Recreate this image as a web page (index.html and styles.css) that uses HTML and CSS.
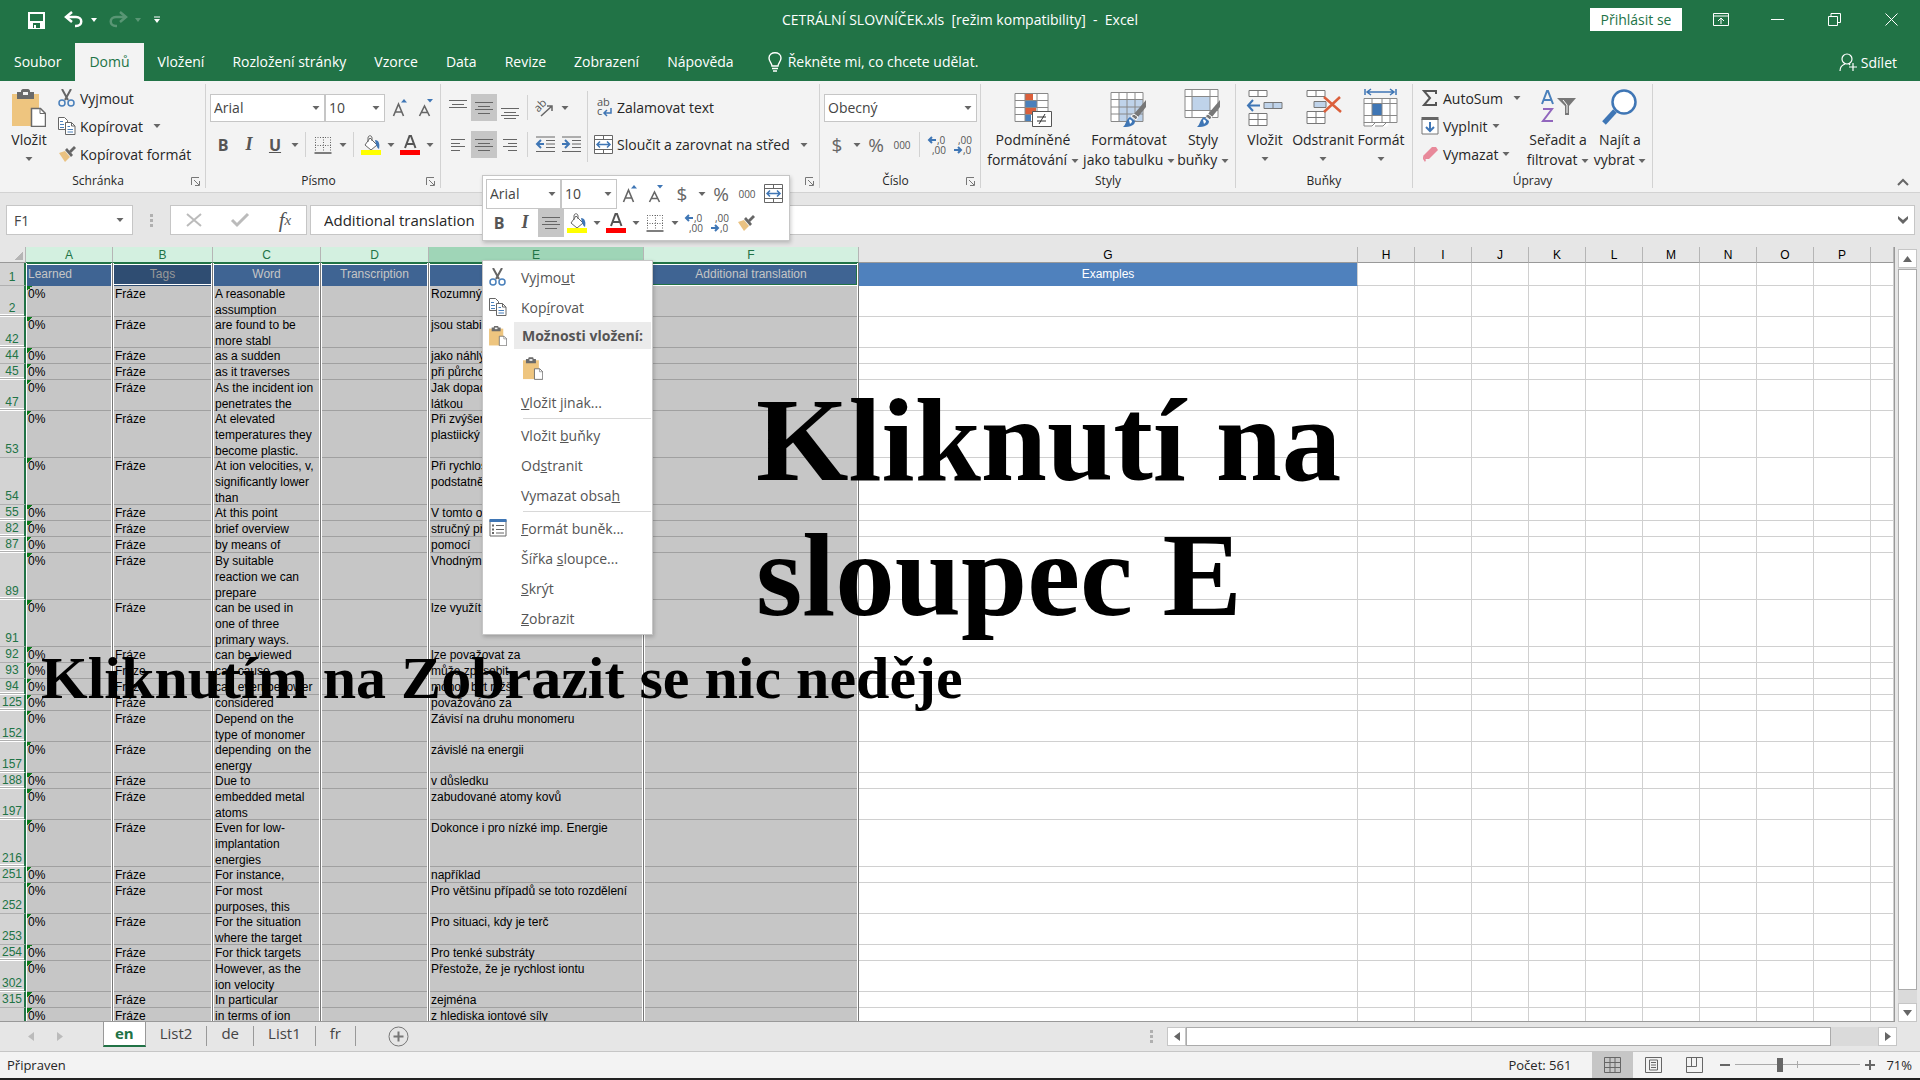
FILE: index.html
```html
<!DOCTYPE html>
<html lang="cs">
<head>
    <meta charset="UTF-8">
    <meta name="viewport" content="width=device-width, initial-scale=1.0">
    <title>CETRÁLNÍ SLOVNÍČEK.xls - Excel</title>
    <link rel="stylesheet" href="styles.css">
</head>
<body>
    <!-- icons used more than once -->
    <svg class="defs" width="0" height="0" aria-hidden="true">
        <symbol id="i-caret" viewBox="0 0 8 8"><path d="M0.500 2h7L4 6z" fill="#666"/></symbol>
        <symbol id="i-cut" viewBox="0 0 18 18"><path d="M4 0l6 11M13 0L7 11" stroke="#666" stroke-width="2" fill="none"/><circle cx="4" cy="14" r="3" fill="none" stroke="#4a80bb" stroke-width="1.500"/><circle cx="13" cy="14" r="3" fill="none" stroke="#4a80bb" stroke-width="1.500"/></symbol>
        <symbol id="i-copy" viewBox="0 0 18 18"><path d="M.5.5h6l3 3v9h-9z" fill="#fff" stroke="#666"/><path d="M7.500 5.500h6l3.500 3.500v8.500H7.500z" fill="#fff" stroke="#666"/><path d="M13.500 5.500V9H17" fill="none" stroke="#666"/><path d="M2 4.500h3M2 7.500h4M2 10.500h4M9.500 9.500h2.500M9.500 12.500h5.500M9.500 15h5.500" stroke="#4a80bb"/></symbol>
        <symbol id="i-brush" viewBox="0 0 18 18"><path d="M1 8l6-2 5 6-5 5z" fill="#eac282"/><path d="M7 5l2-2 6 7-2 2z" fill="#666"/><path d="M11 6l5-5 2 2-5 5z" fill="#666"/></symbol>
        <symbol id="i-paste" viewBox="0 0 34 38"><path d="M0 5h27v32H0z" fill="#eec57f"/><path d="M5 3h4V2c0-1 1-2 2-2h5c1 0 2 1 2 2v1h4v7H5z" fill="#6a6a6a"/><path d="M11 3h5v3h-5z" fill="#f3f3f3"/><path d="M19.500 19.500h9l5 5v13h-14z" fill="#fff" stroke="#6a6a6a" stroke-width="1.500"/><path d="M28 19.500v5h5.500" fill="none" stroke="#6a6a6a"/></symbol>
        <symbol id="i-borders" viewBox="0 0 18 18"><path d="M1 1.500h16M1 9.500h16M1.500 1v15M9.500 1v15M16.500 1v15" stroke="#666" stroke-dasharray="1 1.500" fill="none"/><path d="M.5 17h17" stroke="#555" stroke-width="1.500"/></symbol>
        <symbol id="i-fill" viewBox="0 0 20 20"><path d="M9 3l7 7-6 5-6-5z" fill="#fff" stroke="#666"/><path d="M7 7V3c0-3 4-3 4 0v3" fill="none" stroke="#666"/><path d="M14 5c4 0 5 4 4 9-2-1-3-4-4-9z" fill="#3f76b5"/><path d="M0 15h20v5H0z" fill="#ff0"/></symbol>
        <symbol id="i-fontcolor" viewBox="0 0 20 20"><path d="M5 13L9.500 1h1.500L15.500 13M6.500 9h7" fill="none" stroke="#555" stroke-width="2"/><path d="M0 15h20v5H0z" fill="red"/></symbol>
        <symbol id="i-grow" viewBox="0 0 16 18"><path d="M1.500 17L6.500 5 11.500 17M3 13h7" fill="none" stroke="#666" stroke-width="1.600"/><path d="M9 3.500L12 0l3 3.500z" fill="#3f76b5"/></symbol>
        <symbol id="i-shrink" viewBox="0 0 16 18"><path d="M1.500 17L6.500 7 11.500 17M3 13.500h7" fill="none" stroke="#666" stroke-width="1.600"/><path d="M9 0L12 3.500l3-3.500z" fill="#3f76b5"/></symbol>
        <symbol id="i-center" viewBox="0 0 18 14"><path d="M0 1.500h18M3 5.500h12M0 8.500h18M3 12.500h12" stroke="#666"/></symbol>
        <symbol id="i-merge" viewBox="0 0 19 19"><path d="M.5.500h18v18H.5zM.5 4.500h18M.5 14.500h18M9.500.5v4M9.500 14.500v4" fill="#fff" stroke="#666"/><path d="M3 9.500h13M6 6.500l-3 3 3 3M13 6.500l3 3-3 3" fill="none" stroke="#3f76b5" stroke-width="1.500"/></symbol>
        <symbol id="i-style-brush" viewBox="0 0 24 28"><path d="M23 0v7l-8 10-4-3z" fill="#777"/><path d="M11 14l4 3-2 3-5-4z" fill="#777" stroke="#fff"/><path d="M0 27c3-2 3-8 7-10l5 4c0 4-4 6-12 6z" fill="#3f76b5"/><path d="M6 20c1-1 3 0 3 2l-2 2" fill="#fff"/></symbol>
    </svg>

    <header class="titlebar">
        <div class="quick">
            <button aria-label="Uložit"><svg width="17" height="17"><path d="M1 1h15v15H1z" fill="none" stroke="#fff" stroke-width="2"/><path d="M2 9h13v7H2z" fill="#fff"/><path d="M5 11h7v5H5z" fill="#217346"/><path d="M6 13h2v3H6z" fill="#fff"/></svg></button>
            <button aria-label="Zpět"><svg width="18" height="16"><path d="M2 5h9c7 0 7 9 0 9h-1" fill="none" stroke="#fff" stroke-width="2.500"/><path d="M7 0L1 5l6 5" fill="none" stroke="#fff" stroke-width="2.500"/></svg><i class="tri"></i></button>
            <button class="off" aria-label="Znovu"><svg width="18" height="16"><path d="M16 5H7c-7 0-7 9 0 9h1" fill="none" stroke="#fff" stroke-width="2.500"/><path d="M11 0l6 5-6 5" fill="none" stroke="#fff" stroke-width="2.500"/></svg><i class="tri"></i></button>
            <button aria-label="Přizpůsobit"><svg width="8" height="8"><path d="M1 1h6" stroke="#fff"/><path d="M1 3h6L4 7z" fill="#fff"/></svg></button>
        </div>
        <div class="doc-title">CETRÁLNÍ SLOVNÍČEK.xls&nbsp; [režim kompatibility]&nbsp; -&nbsp; Excel</div>
        <div class="window-buttons">
            <button class="signin">Přihlásit se</button>
            <button aria-label="Zobrazení pásu karet"><svg width="16" height="13"><path d="M.5.500h15v12H.5zM.5 3h15M8 11V5M5 8l3-3 3 3" fill="none" stroke="#fff"/></svg></button>
            <button aria-label="Minimalizovat"><svg width="13" height="13"><path d="M0 6.500h13" stroke="#fff"/></svg></button>
            <button aria-label="Obnovit"><svg width="13" height="13"><path d="M.5 3.500h9v9h-9zM3 3V.5h9.500v9H10" fill="none" stroke="#fff"/></svg></button>
            <button aria-label="Zavřít"><svg width="13" height="13"><path d="M.5.5l12 12M12.500.5l-12 12" stroke="#fff"/></svg></button>
        </div>
    </header>

    <nav class="tabs">
        <a href="#">Soubor</a>
        <a href="#" class="active">Domů</a>
        <a href="#">Vložení</a>
        <a href="#">Rozložení stránky</a>
        <a href="#">Vzorce</a>
        <a href="#">Data</a>
        <a href="#">Revize</a>
        <a href="#">Zobrazení</a>
        <a href="#">Nápověda</a>
        <a href="#" class="tell"><svg width="14" height="20"><path d="M4 14c0-3-3-4-3-8 0-7 12-7 12 0 0 4-3 5-3 8zM4 16.500h6M5 19h4" fill="none" stroke="#fff" stroke-width="1.400"/></svg>Řekněte mi, co chcete udělat.</a>
        <a href="#" class="share"><svg width="18" height="18"><circle cx="8" cy="6" r="5" fill="none" stroke="#fff" stroke-width="1.200"/><path d="M1 18c0-4 2-6 5-7M10 11l1 1M14 10v8M10 14h8" fill="none" stroke="#fff" stroke-width="1.200"/></svg>Sdílet</a>
    </nav>

    <section class="ribbon">
        <div class="group clipboard">
            <div class="group-body">
                <button class="big"><svg width="34" height="38"><use href="#i-paste"/></svg><span>Vložit</span><svg class="caret"><use href="#i-caret"/></svg></button>
                <div class="stack">
                    <button class="line"><svg width="18" height="18"><use href="#i-cut"/></svg>Vyjmout</button>
                    <button class="line"><svg width="18" height="18"><use href="#i-copy"/></svg>Kopírovat<svg class="caret far"><use href="#i-caret"/></svg></button>
                    <button class="line"><svg width="18" height="18"><use href="#i-brush"/></svg>Kopírovat formát</button>
                </div>
            </div>
            <div class="group-label"><span>Schránka</span><svg class="launch"><path d="M.5 8V.5H8M3 3l5 5M8.500 4v4.500H4" /></svg></div>
        </div>

        <div class="group font">
            <div class="group-body rows">
                <div class="tool-row">
                    <div class="combo family"><input type="text" value="Arial" aria-label="Písmo"><svg class="caret"><use href="#i-caret"/></svg></div>
                    <div class="combo size"><input type="text" value="10" aria-label="Velikost"><svg class="caret"><use href="#i-caret"/></svg></div>
                    <button class="tool" aria-label="Zvětšit písmo"><svg width="16" height="18"><use href="#i-grow"/></svg></button>
                    <button class="tool" aria-label="Zmenšit písmo"><svg width="16" height="18"><use href="#i-shrink"/></svg></button>
                </div>
                <div class="tool-row">
                    <button class="tool bold">B</button>
                    <button class="tool italic">I</button>
                    <button class="tool under">U</button>
                    <button class="drop" aria-label="Více"><svg class="caret"><use href="#i-caret"/></svg></button>
                    <span class="sep"></span>
                    <button class="tool" aria-label="Ohraničení"><svg width="18" height="18"><use href="#i-borders"/></svg></button>
                    <button class="drop" aria-label="Více"><svg class="caret"><use href="#i-caret"/></svg></button>
                    <span class="sep"></span>
                    <button class="tool" aria-label="Barva výplně"><svg width="20" height="20"><use href="#i-fill"/></svg></button>
                    <button class="drop" aria-label="Více"><svg class="caret"><use href="#i-caret"/></svg></button>
                    <button class="tool" aria-label="Barva písma"><svg width="20" height="20"><use href="#i-fontcolor"/></svg></button>
                    <button class="drop" aria-label="Více"><svg class="caret"><use href="#i-caret"/></svg></button>
                </div>
            </div>
            <div class="group-label"><span>Písmo</span><svg class="launch"><path d="M.5 8V.5H8M3 3l5 5M8.500 4v4.500H4" /></svg></div>
        </div>

        <div class="group align">
            <div class="group-body">
                <div class="rows">
                    <div class="tool-row">
                        <button class="tool" aria-label="Nahoru"><svg width="18" height="22"><path d="M0 3.500h18M3 7.500h12M0 10.500h18" stroke="#666"/></svg></button>
                        <button class="tool on" aria-label="Na střed svisle"><svg width="18" height="14"><use href="#i-center"/></svg></button>
                        <button class="tool" aria-label="Dolů"><svg width="18" height="22"><path d="M0 11.500h18M3 15.500h12M0 18.500h18M3 21.500h12" stroke="#666"/></svg></button>
                        <span class="sep"></span>
                        <button class="tool" aria-label="Orientace"><svg width="20" height="20"><text x="0" y="11" transform="rotate(-45 6 9)" class="ab">ab</text><path d="M6 18L17 8M12 8h5v5" fill="none" stroke="#666" stroke-width="1.500"/></svg></button>
                        <button class="drop" aria-label="Více"><svg class="caret"><use href="#i-caret"/></svg></button>
                    </div>
                    <div class="tool-row">
                        <button class="tool" aria-label="Vlevo"><svg width="14" height="14"><path d="M0 1.500h14M0 5.500h9M0 8.500h14M0 12.500h9" stroke="#666"/></svg></button>
                        <button class="tool on" aria-label="Na střed"><svg width="18" height="14"><use href="#i-center"/></svg></button>
                        <button class="tool" aria-label="Vpravo"><svg width="14" height="14"><path d="M0 1.500h14M5 5.500h9M0 8.500h14M5 12.500h9" stroke="#666"/></svg></button>
                        <span class="sep"></span>
                        <button class="tool" aria-label="Zmenšit odsazení"><svg width="19" height="17"><path d="M0 1h19M10 4.500h9M10 8h9M10 11.500h9M0 15.500h19" stroke="#666"/><path d="M8 8H2M5 4L1 8l4 4" fill="none" stroke="#3f76b5" stroke-width="2"/></svg></button>
                        <button class="tool" aria-label="Zvětšit odsazení"><svg width="19" height="17"><path d="M0 1h19M10 4.500h9M10 8h9M10 11.500h9M0 15.500h19" stroke="#666"/><path d="M0 8h6M3 4l4 4-4 4" fill="none" stroke="#3f76b5" stroke-width="2"/></svg></button>
                    </div>
                </div>
                <span class="sep tall"></span>
                <div class="rows wide">
                    <button class="line"><svg width="19" height="19"><text x="3" y="8" class="ab">ab</text><text x="3" y="17" class="ab">c</text><path d="M17 10v5H11M13 12l-3 3 3 3" fill="none" stroke="#3f76b5" stroke-width="1.500"/></svg>Zalamovat text</button>
                    <button class="line"><svg width="19" height="19"><use href="#i-merge"/></svg>Sloučit a zarovnat na střed<svg class="caret far"><use href="#i-caret"/></svg></button>
                </div>
            </div>
            <div class="group-label"><span>Zarovnání</span><svg class="launch"><path d="M.5 8V.5H8M3 3l5 5M8.500 4v4.500H4" /></svg></div>
        </div>

        <div class="group number">
            <div class="group-body rows">
                <div class="tool-row">
                    <div class="combo format"><input type="text" value="Obecný" aria-label="Formát čísla"><svg class="caret"><use href="#i-caret"/></svg></div>
                </div>
                <div class="tool-row">
                    <button class="tool sign">$</button>
                    <button class="drop" aria-label="Více"><svg class="caret"><use href="#i-caret"/></svg></button>
                    <button class="tool sign">%</button>
                    <button class="tool zeros">000</button>
                    <span class="sep"></span>
                    <button class="tool" aria-label="Přidat desetinné místo"><svg width="18" height="20"><text x="9" y="9" class="dec">,0</text><text x="4" y="19" class="dec">,00</text><path d="M1 5h7M4 2L1 5l3 3" fill="none" stroke="#3f76b5" stroke-width="2"/></svg></button>
                    <button class="tool" aria-label="Odebrat desetinné místo"><svg width="18" height="20"><text x="4" y="9" class="dec">,00</text><text x="9" y="19" class="dec">,0</text><path d="M0 15h7M4 12l3 3-3 3" fill="none" stroke="#3f76b5" stroke-width="2"/></svg></button>
                </div>
            </div>
            <div class="group-label"><span>Číslo</span><svg class="launch"><path d="M.5 8V.5H8M3 3l5 5M8.500 4v4.500H4" /></svg></div>
        </div>

        <div class="group styles">
            <div class="group-body">
                <button class="big"><svg width="38" height="38"><path d="M1 4.500h33v27H1z" fill="#fff"/><path d="M11 4h8v7h-8zM11 19h11v6H11z" fill="#db5f3b"/><path d="M11 12h12v6H11zM11 26h6v6h-6z" fill="#4a80bb"/><path d="M1 4.500h33v28H1zM1 11.500h33M1 18.500h33M1 25.500h33M11 4v28M23 4v28" fill="none" stroke="#888"/><path d="M18.500 22.500h19v15h-19z" fill="#fff" stroke="#555"/><path d="M23 28h9M23 32h9M31 25l-6 10" stroke="#333"/></svg><span>Podmíněné<br>formátování <svg class="caret"><use href="#i-caret"/></svg></span></button>
                <button class="big"><svg width="38" height="38"><path d="M1 3.500h32v29H1z" fill="#fff"/><path d="M9 10h24v22H9z" fill="#bfd3ea"/><path d="M1 3.500h32v29H1zM1 10.500h32M1 18h32M1 25h32M9 3v29M17 3v29M25 3v29" fill="none" stroke="#888"/><use href="#i-style-brush" x="12" y="11" width="26" height="28"/></svg><span>Formátovat<br>jako tabulku <svg class="caret"><use href="#i-caret"/></svg></span></button>
                <button class="big"><svg width="38" height="38"><path d="M1 .5h33v28H1z" fill="#fff"/><path d="M8 8h18v13H8z" fill="#bfd3ea"/><path d="M1 .5h33v28H1zM1 7.500h33M1 21.500h33M8 1v27M26 1v27" fill="none" stroke="#888"/><use href="#i-style-brush" x="12" y="11" width="26" height="28"/></svg><span>Styly<br>buňky <svg class="caret"><use href="#i-caret"/></svg></span></button>
            </div>
            <div class="group-label"><span>Styly</span></div>
        </div>

        <div class="group cells">
            <div class="group-body">
                <button class="big"><svg width="38" height="38"><path d="M3 1.500h18v6H3zM12 1v6M3 24.500h18v12H3zM3 30.500h18M12 24v12" fill="#fff" stroke="#777"/><path d="M18 13.500h18v6H18zM27 13v6" fill="#bfd3ea" stroke="#777"/><path d="M14 16.500H2M7 11l-5 5.500L7 22" fill="none" stroke="#3f76b5" stroke-width="2"/></svg><span>Vložit</span><svg class="caret"><use href="#i-caret"/></svg></button>
                <button class="big"><svg width="38" height="38"><path d="M3 1.500h18v6H3zM12 1v6M3 22.500h18v12H3zM3 28.500h18M12 22v12" fill="#fff" stroke="#777"/><path d="M10 12.500h12v6H10z" fill="#bfd3ea" stroke="#777"/><path d="M20 8l17 15M36 8L20 23" fill="none" stroke="#db5f3b" stroke-width="2.500"/></svg><span>Odstranit</span><svg class="caret"><use href="#i-caret"/></svg></button>
                <button class="big"><svg width="38" height="38"><path d="M2 9.500h33v24h-7l-3 4H2z" fill="#fff"/><path d="M10 15h10v11H10z" fill="#3f76b5"/><path d="M2 9.500h33v24H2zM2 14.500h33M2 26.500h33M10 9v24M20 9v24M28 9v24M2 33v4h8l3-3M13 37h8l4-4" fill="none" stroke="#888"/><path d="M3 0v6M34 0v6M5 3h27M9 0L5 3l4 3M28 0l4 3-4 3" fill="none" stroke="#3f76b5" stroke-width="1.500"/></svg><span>Formát</span><svg class="caret"><use href="#i-caret"/></svg></button>
            </div>
            <div class="group-label"><span>Buňky</span></div>
        </div>

        <div class="group editing">
            <div class="group-body">
                <div class="stack">
                    <button class="line"><svg width="18" height="18"><path d="M15 5V2H3l6 7-6 7h12v-3" fill="none" stroke="#555" stroke-width="2"/></svg>AutoSum<svg class="caret far"><use href="#i-caret"/></svg></button>
                    <button class="line"><svg width="18" height="18"><path d="M1 2h16v15H1z" fill="#fff" stroke="#777"/><path d="M.5 1.500h17" stroke="#666" stroke-width="3"/><path d="M9 5v9M5 10l4 4 4-4" fill="none" stroke="#3f76b5" stroke-width="2"/></svg>Vyplnit<svg class="caret"><use href="#i-caret"/></svg></button>
                    <button class="line"><svg width="18" height="18"><path d="M2 11l9-9h4l2 3-9 9H4z" fill="#e8899a"/><path d="M2 11l3 4-1 2-2-3z" fill="#e8899a"/></svg>Vymazat<svg class="caret"><use href="#i-caret"/></svg></button>
                </div>
                <button class="big"><svg width="38" height="38"><path d="M3 15L8 2h1l5 13M5 11h7" fill="none" stroke="#4a80bb" stroke-width="2"/><path d="M4 20h9L4 32h10" fill="none" stroke="#9166bd" stroke-width="2"/><path d="M18 9h19l-7 8v9h-4v-9z" fill="#777"/><path d="M24 11l4 5v8" fill="none" stroke="#fff"/></svg><span>Seřadit a<br>filtrovat <svg class="caret"><use href="#i-caret"/></svg></span></button>
                <button class="big"><svg width="38" height="38"><path d="M14 22L3 34" stroke="#3f76b5" stroke-width="5"/><circle cx="23" cy="13" r="11.500" fill="#fff" stroke="#3f76b5" stroke-width="2.500"/></svg><span>Najít a<br>vybrat <svg class="caret"><use href="#i-caret"/></svg></span></button>
            </div>
            <div class="group-label"><span>Úpravy</span></div>
        </div>
        <button class="collapse" aria-label="Sbalit pás karet"><svg width="12" height="8"><path d="M1 7l5-5 5 5" fill="none" stroke="#666" stroke-width="2"/></svg></button>
    </section>

    <section class="formula-bar">
        <div class="combo name-box"><input type="text" value="F1" aria-label="Pole názvů"><svg class="caret"><use href="#i-caret"/></svg></div>
        <span class="dots"></span>
        <div class="formula-tools">
            <button aria-label="Storno"><svg width="16" height="14"><path d="M1 1l14 12M15 1L1 13" stroke="#bbb" stroke-width="2"/></svg></button>
            <button aria-label="Zadat"><svg width="18" height="14"><path d="M1 7l5 5L17 1" fill="none" stroke="#bbb" stroke-width="3"/></svg></button>
            <button class="fx">f<small>x</small></button>
        </div>
        <div class="formula-input"><input type="text" value="Additional translation" aria-label="Řádek vzorců"><svg width="10" height="8"><path d="M0 0l5 4 5-4v3L5 8 0 3z" fill="#666"/></svg></div>
    </section>

    <main class="workspace">
        <div class="sheet">
            <table>
                <colgroup>
                    <col class="c-head"><col class="c-a"><col class="c-b"><col class="c-c"><col class="c-c"><col class="c-e"><col class="c-e"><col class="c-g">
                    <col class="c-n"><col class="c-n"><col class="c-n"><col class="c-n"><col class="c-n"><col class="c-n"><col class="c-n"><col class="c-n"><col class="c-n"><col>
                </colgroup>
                <thead><tr id="letters"></tr></thead>
                <tbody id="rows"></tbody>
            </table>
        </div>
        <div class="vscroll">
            <button aria-label="Nahoru"><svg width="9" height="6"><path d="M0 6h9L4.500 0z" fill="#666"/></svg></button>
            <div class="thumb"></div>
            <div class="track"></div>
            <button aria-label="Dolů"><svg width="9" height="6"><path d="M0 0h9L4.500 6z" fill="#666"/></svg></button>
        </div>
    </main>

    <footer>
        <div class="sheet-tabs">
            <div class="tab-nav">
                <button aria-label="Předchozí"><svg width="6" height="9"><path d="M6 0v9L0 4.500z" fill="#bbb"/></svg></button>
                <button aria-label="Další"><svg width="6" height="9"><path d="M0 0v9l6-4.500z" fill="#bbb"/></svg></button>
            </div>
            <a href="#" class="current">en</a>
            <a href="#">List2</a>
            <a href="#">de</a>
            <a href="#">List1</a>
            <a href="#">fr</a>
            <button class="add" aria-label="Nový list"><svg width="21" height="21"><circle cx="10.500" cy="10.500" r="9.500" fill="none" stroke="#777"/><path d="M5.500 10.500h10M10.500 5.500v10" stroke="#777" stroke-width="2"/></svg></button>
            <span class="dots"></span>
            <div class="hscroll">
                <button aria-label="Vlevo"><svg width="6" height="9"><path d="M6 0v9L0 4.500z" fill="#666"/></svg></button>
                <div class="thumb"></div>
                <div class="track"></div>
                <button aria-label="Vpravo"><svg width="6" height="9"><path d="M0 0v9l6-4.500z" fill="#666"/></svg></button>
            </div>
        </div>
        <div class="status">
            <span class="ready">Připraven</span>
            <span class="count">Počet: 561</span>
            <button class="view on" aria-label="Normální"><svg width="17" height="16"><path d="M.5.500h16v15H.5zM.5 5.500h16M.5 10.500h16M6 .5v15M11 .5v15" fill="none" stroke="#666"/></svg></button>
            <button class="view" aria-label="Rozložení stránky"><svg width="17" height="16"><path d="M.5.500h16v15H.5zM4.500 3h8v10h-8zM6 5.500h5M6 8h5M6 10.500h5" fill="none" stroke="#666"/></svg></button>
            <button class="view" aria-label="Konce stránek"><svg width="17" height="16"><path d="M.5.500h16v15H.5zM.5 9.500h10V.5M5.500.5v9" fill="none" stroke="#666"/></svg></button>
            <button class="zoom-step" aria-label="Oddálit"><svg width="10" height="10"><path d="M0 5h10" stroke="#666" stroke-width="2"/></svg></button>
            <input class="zoom" type="range" min="0" max="100" value="35" aria-label="Lupa">
            <button class="zoom-step" aria-label="Přiblížit"><svg width="10" height="10"><path d="M0 5h10M5 0v10" stroke="#666" stroke-width="2"/></svg></button>
            <span class="percent">71%</span>
        </div>
    </footer>

    <div class="mini-toolbar">
        <div class="tool-row">
            <div class="combo mini-family"><input type="text" value="Arial" aria-label="Písmo"><svg class="caret"><use href="#i-caret"/></svg></div>
            <div class="combo mini-size"><input type="text" value="10" aria-label="Velikost"><svg class="caret"><use href="#i-caret"/></svg></div>
            <button class="tool" aria-label="Zvětšit písmo"><svg width="16" height="18"><use href="#i-grow"/></svg></button>
            <button class="tool" aria-label="Zmenšit písmo"><svg width="16" height="18"><use href="#i-shrink"/></svg></button>
            <button class="tool sign">$</button>
            <button class="drop" aria-label="Více"><svg class="caret"><use href="#i-caret"/></svg></button>
            <button class="tool sign">%</button>
            <button class="tool zeros">000</button>
            <button class="tool" aria-label="Sloučit"><svg width="19" height="19"><use href="#i-merge"/></svg></button>
        </div>
        <div class="tool-row">
            <button class="tool bold">B</button>
            <button class="tool italic">I</button>
            <button class="tool on" aria-label="Na střed"><svg width="18" height="14"><use href="#i-center"/></svg></button>
            <button class="tool" aria-label="Barva výplně"><svg width="20" height="20"><use href="#i-fill"/></svg></button>
            <button class="drop" aria-label="Více"><svg class="caret"><use href="#i-caret"/></svg></button>
            <button class="tool" aria-label="Barva písma"><svg width="20" height="20"><use href="#i-fontcolor"/></svg></button>
            <button class="drop" aria-label="Více"><svg class="caret"><use href="#i-caret"/></svg></button>
            <button class="tool" aria-label="Ohraničení"><svg width="18" height="18"><use href="#i-borders"/></svg></button>
            <button class="drop" aria-label="Více"><svg class="caret"><use href="#i-caret"/></svg></button>
            <button class="tool" aria-label="Přidat desetinné místo"><svg width="18" height="20"><text x="9" y="9" class="dec">,0</text><text x="4" y="19" class="dec">,00</text><path d="M1 5h7M4 2L1 5l3 3" fill="none" stroke="#3f76b5" stroke-width="2"/></svg></button>
            <button class="tool" aria-label="Odebrat desetinné místo"><svg width="18" height="20"><text x="4" y="9" class="dec">,00</text><text x="9" y="19" class="dec">,0</text><path d="M0 15h7M4 12l3 3-3 3" fill="none" stroke="#3f76b5" stroke-width="2"/></svg></button>
            <button class="tool" aria-label="Kopírovat formát"><svg width="18" height="18"><use href="#i-brush"/></svg></button>
        </div>
    </div>

    <div class="context-menu">
        <button><svg width="18" height="18"><use href="#i-cut"/></svg><span>Vyjmo<u>u</u>t</span></button>
        <button><svg width="18" height="18"><use href="#i-copy"/></svg><span>Kop<u>í</u>rovat</span></button>
        <div class="menu-title"><svg width="18" height="20"><use href="#i-paste"/></svg><span>Možnosti vložení:</span></div>
        <button class="paste-option" aria-label="Vložit"><svg width="20" height="23"><use href="#i-paste"/></svg></button>
        <button><span><u>V</u>ložit jinak...</span></button>
        <hr>
        <button><span>Vložit <u>b</u>uňky</span></button>
        <button><span>Od<u>s</u>tranit</span></button>
        <button><span>Vymazat obsa<u>h</u></span></button>
        <hr>
        <button><svg width="18" height="18"><path d="M1 1h16v16H1z" fill="#fff" stroke="#666"/><path d="M.5 1.500h17" stroke="#3f76b5" stroke-width="3"/><path d="M7 6.500h8M7 10.500h8M7 14h8" stroke="#666"/><path d="M3 6.500h2M3 10.500h2M3 14h2" stroke="#666" stroke-width="2"/></svg><span><u>F</u>ormát buněk...</span></button>
        <button><span>Šířka <u>s</u>loupce...</span></button>
        <button><span><u>S</u>krýt</span></button>
        <button><span><u>Z</u>obrazit</span></button>
    </div>

    <p class="note note-large">Kliknutí na<br>sloupec E</p>
    <p class="note note-small">Kliknutím na Zobrazit se nic neděje</p>

    <script>
        // číslo řádku, počet řádků textu, Word, překlad
        const data = [
            [2, 2, 'A reasonable\nassumption', 'Rozumný předpoklad'],
            [42, 2, 'are found to be\nmore stabl', 'jsou stabilnější'],
            [44, 1, 'as a sudden', 'jako náhlý'],
            [45, 1, 'as it traverses', 'při půrchodu'],
            [47, 2, 'As the incident ion\npenetrates the', 'Jak dopadající iont\nlátkou'],
            [53, 3, 'At elevated\ntemperatures they\nbecome plastic.', 'Při zvýšených\nplastiický'],
            [54, 3, 'At ion velocities, v,\nsignificantly lower\nthan', 'Při rychlosti\npodstatně'],
            [55, 1, 'At this point', 'V tomto okamžiku'],
            [82, 1, 'brief overview', 'stručný přehled'],
            [87, 1, 'by means of', 'pomocí'],
            [89, 3, 'By suitable\nreaction we can\nprepare', 'Vhodnými'],
            [91, 3, 'can be used in\none of three\nprimary ways.', 'lze využít jedním'],
            [92, 1, 'can be viewed', 'lze považovat za'],
            [93, 1, 'can cause', 'může způsobit'],
            [94, 1, 'can even be lower', 'mohou být nižší'],
            [125, 1, 'considered', 'považováno za'],
            [152, 2, 'Depend on the\ntype of monomer', 'Závisí na druhu monomeru'],
            [157, 2, 'depending  on the\nenergy', 'závislé na energii'],
            [188, 1, 'Due to', 'v důsledku'],
            [197, 2, 'embedded metal\natoms', 'zabudované atomy kovů'],
            [216, 3, 'Even for low-\nimplantation\nenergies', 'Dokonce i pro nízké imp. Energie'],
            [251, 1, 'For instance,', 'například'],
            [252, 2, 'For most\npurposes, this', 'Pro většinu případů se toto rozdělení'],
            [253, 2, 'For the situation\nwhere the target', 'Pro situaci, kdy je terč'],
            [254, 1, 'For thick targets', 'Pro tenké substráty'],
            [302, 2, 'However, as the\nion velocity', 'Přestože, že je rychlost iontu'],
            [315, 1, 'In particular', 'zejména'],
            [316, 2, 'in terms of ion', 'z hlediska iontové síly']
        ];
        const letters = 'ABCDEFGHIJKLMNOP'.split('');
        const titles = ['Learned', 'Tags', 'Word', 'Transcription', 'Translation', 'Additional translation', 'Examples'];

        // záhlaví sloupců
        document.getElementById('letters').innerHTML = '<th class="corner"></th>' +
            letters.map(l => `<th class="${l === 'E' ? 'picked' : l < 'G' ? 'sel' : ''}">${l}</th>`).join('') + '<th></th>';

        const blanks = '<td></td>'.repeat(10);
        let html = '<tr class="titles"><th><div>1</div></th>' +
            titles.map((t, i) => `<td class="t${i}${i < 6 ? ' sel' : ''}"><div>${t}</div></td>`).join('') + blanks + '</tr>';

        data.forEach((row, i) => {
            const [num, lines, word, text] = row;
            const next = data[i + 1];
            const gap = next && next[0] !== num + 1 ? ' class="gap"' : '';
            html += `<tr class="l${lines}"><th${gap}><div>${num}</div></th>` +
                ['0%', 'Fráze', word, '', text, ''].map((t, c) => `<td class="sel${c ? '' : ' flag'}"><div>${t}</div></td>`).join('') +
                '<td></td>' + blanks + '</tr>';
        });
        document.getElementById('rows').innerHTML = html;
    </script>
</body>
</html>
```
FILE: styles.css
```css
* {
    box-sizing: border-box;
}
body {
    margin: 0;
    height: 100vh;
    display: flex;
    flex-direction: column;
    overflow: hidden;
    font-family: 'Open Sans', 'Noto Sans', sans-serif;
    font-size: 14px;
    color: #262626;
    background: #e6e6e6;
    border-bottom: 2px solid #222;
}
button,
input {
    font: inherit;
    color: inherit;
    background: none;
    border: 0;
    padding: 0;
    margin: 0;
    min-width: 0;
}
button {
    display: flex;
    align-items: center;
    justify-content: center;
    white-space: nowrap;
}
a {
    color: inherit;
    text-decoration: none;
}
svg {
    flex: none;
    overflow: visible;
}
.defs {
    position: absolute;
}
.caret {
    width: 8px;
    height: 8px;
}

/* title bar */
.titlebar {
    display: grid;
    grid-template-columns: 1fr auto 1fr;
    height: 43px;
    flex: none;
    background: #217346;
    color: #fff;
}
.quick {
    display: flex;
    align-items: center;
    gap: 12px;
    padding-left: 28px;
    height: 40px;
}
.quick button {
    gap: 8px;
}
.quick button:first-child {
    margin-right: 8px;
}
.quick .off {
    opacity: 0.25;
}
.tri {
    border: 3px solid transparent;
    border-top: 4px solid #fff;
    border-bottom: 0;
}
.doc-title {
    line-height: 40px;
}
.window-buttons {
    display: flex;
    align-items: center;
    justify-content: flex-end;
    height: 39px;
}
.window-buttons button {
    width: 57px;
}
.window-buttons .signin {
    width: 92px;
    height: 23px;
    margin-right: 10px;
    background: #fff;
    color: #217346;
}

/* ribbon tabs */
.tabs {
    display: flex;
    height: 38px;
    flex: none;
    background: #217346;
    color: #fff;
    line-height: 37px;
}
.tabs a {
    padding: 0 14px;
}
.tabs .active {
    background: #f3f3f3;
    color: #217346;
}
.tabs .tell,
.tabs .share {
    display: flex;
    align-items: center;
    gap: 6px;
}
.tabs .tell {
    padding-left: 20px;
    line-height: 36px;
}
.tabs .share {
    margin-left: auto;
    padding-right: 23px;
    gap: 4px;
}

/* ribbon */
.ribbon {
    display: flex;
    height: 112px;
    flex: none;
    background: #f3f3f3;
    border-bottom: 1px solid #d2d2d2;
}
.group {
    display: flex;
    flex-direction: column;
    margin: 3px 0 4px;
    border-right: 1px solid #d2d2d2;
}
.group-body {
    flex: 1;
    display: flex;
}
.group-label {
    display: flex;
    align-items: center;
    height: 14px;
    padding: 0 5px;
    font-size: 12px;
    line-height: 14px;
}
.group-label span {
    flex: 1;
    text-align: center;
}
.launch {
    width: 9px;
    height: 9px;
    fill: none;
    stroke: #777;
}
.clipboard { width: 206px; }
.font { width: 235px; }
.align { width: 379px; }
.number { width: 161px; }
.styles { width: 255px; }
.cells { width: 177px; }
.editing { width: 240px; }

.big {
    flex-direction: column;
    justify-content: flex-start;
    padding-top: 5px;
    line-height: 20px;
}
.big > span {
    margin-top: 3px;
}
.big > .caret {
    margin-top: 5px;
}
.clipboard .big {
    width: 58px;
}
.styles .group-body {
    padding-left: 4px;
}
.styles .big {
    width: 96px;
}
.styles .big:last-child {
    width: 52px;
}
.cells .big {
    width: 58px;
}
.editing .big {
    width: 66px;
}
.editing .big:last-child {
    width: 58px;
}
.stack {
    display: flex;
    flex-direction: column;
}
.stack .line {
    height: 28px;
}
.line {
    justify-content: flex-start;
    gap: 4px;
}
.caret.far {
    margin-left: 6px;
}
.editing .stack {
    width: 112px;
    padding-left: 8px;
}
.rows {
    flex-direction: column;
    padding: 10px 0 0 4px;
}
.tool-row {
    display: flex;
    align-items: center;
    height: 27px;
}
.ribbon .tool-row + .tool-row,
.wide .line + .line {
    margin-top: 10px;
}
.wide .line {
    height: 27px;
}
.tool {
    width: 26px;
    height: 27px;
}
.tool.on {
    background: #c6c6c6;
}
.drop {
    width: 13px;
    height: 27px;
}
.bold,
.italic,
.under {
    font-size: 16px;
    font-weight: 700;
    color: #555;
}
.italic {
    font-family: 'Liberation Serif', serif;
    font-size: 18px;
    font-style: italic;
}
.under {
    text-decoration: underline;
}
.sign {
    font-size: 19px;
    color: #666;
}
.zeros {
    font-size: 10px;
    color: #555;
}
.sep {
    width: 1px;
    height: 25px;
    margin: 0 4px;
    background: #d2d2d2;
}
.sep.tall {
    height: 71px;
    margin: 7px 2px 0 3px;
}
.ab {
    font-size: 11px;
    fill: #555;
}
.dec {
    font-size: 10px;
    fill: #555;
}
.combo {
    display: flex;
    align-items: center;
    height: 28px;
    padding: 0 4px 0 3px;
    background: #fff;
    border: 1px solid #c6c6c6;
    color: #444;
}
.combo input {
    flex: 1;
    width: 0;
}
.family { width: 115px; }
.size { width: 60px; margin-right: 2px; }
.format { width: 153px; }
.collapse {
    align-self: flex-end;
    margin: 0 11px 6px auto;
}

/* formula bar */
.formula-bar {
    display: flex;
    flex: none;
    height: 54px;
    padding: 12px 5px 12px 6px;
}
.name-box {
    width: 127px;
    height: 30px;
    padding: 0 8px 0 7px;
}
.dots {
    width: 3px;
    height: 13px;
    background: repeating-linear-gradient(#b0b0b0 0 3px, transparent 3px 5px);
}
.formula-bar .dots {
    margin: 9px 17px;
}
.formula-tools {
    display: flex;
    justify-content: space-around;
    width: 137px;
    height: 30px;
    background: #fff;
    border: 1px solid #c6c6c6;
}
.fx {
    font-family: 'Liberation Serif', serif;
    font-style: italic;
    font-size: 21px;
    color: #555;
}
.fx small {
    font-size: 15px;
}
.formula-input {
    flex: 1;
    display: flex;
    align-items: center;
    height: 30px;
    margin-left: 3px;
    padding: 0 6px 0 13px;
    background: #fff;
    border: 1px solid #c6c6c6;
    font-size: 15px;
}
.formula-input input {
    flex: 1;
}

/* sheet */
.workspace {
    flex: 1;
    min-height: 0;
    display: flex;
}
.sheet {
    flex: 1;
    overflow: hidden;
    background: #fff;
    border-right: 1px solid #999;
    border-bottom: 1px solid #999;
}
table {
    table-layout: fixed;
    width: 100%;
    border-collapse: separate;
    border-spacing: 0;
    font-family: 'Liberation Sans', Arial, sans-serif;
    font-size: 12px;
    line-height: 16px;
    color: #000;
}
.c-head { width: 26px; }
.c-a { width: 87px; }
.c-b { width: 100px; }
.c-c { width: 108px; }
.c-e { width: 215px; }
.c-g { width: 499px; }
.c-n { width: 57px; }
th,
td {
    padding: 0;
    font-weight: 400;
    border-right: 1px solid #d0d0d0;
    border-bottom: 1px solid #d0d0d0;
}
thead th {
    height: 16px;
    padding-top: 2px;
    line-height: 13px;
    background: #e6e6e6;
    border-right-color: #b5b5b5;
    border-bottom-color: #999;
}
thead .sel {
    background: #d3f0e0;
    color: #217346;
    border-bottom-color: #217346;
}
thead .picked {
    background: #9fd5b7;
    color: #217346;
    border-bottom-color: #217346;
}
thead .corner {
    background: linear-gradient(135deg, transparent 50%, #b5b5b5 50%) 14px 4px / 9px 9px no-repeat #e6e6e6;
}
td div {
    overflow: hidden;
    white-space: pre;
    padding: 0 2px;
}
tbody th {
    vertical-align: bottom;
    background: #d3d3d3;
    color: #217346;
    border-right: 2px solid #217346;
    border-bottom-color: #b0b0b0;
}
tbody th div {
    height: 15px;
    line-height: 15px;
}
.l1 td div { height: 15px; }
.l2 td div { height: 30px; }
.l3 td div { height: 46px; }
tbody .gap {
    border-bottom-color: #fff;
    box-shadow: inset 0 -1px #b0b0b0, inset 0 -2px #fff;
}
td.sel {
    background: #c6c6c6;
    border-right-color: #777;
    border-bottom: 0;
    box-shadow: inset 1px 0 #fff, inset -1px 0 #fff, inset 0 -1px #a0a0a0;
}
.l1 .sel div { height: 16px; }
.l2 .sel div { height: 31px; }
.l3 .sel div { height: 47px; }
td.flag {
    background: linear-gradient(135deg, #0a7a1a 50%, transparent 50%) 1px 0 / 5px 5px no-repeat #c6c6c6;
}
.titles td div {
    height: 22px;
    padding-top: 3px;
    text-align: center;
}
.titles .sel div {
    height: 23px;
}
.titles .sel {
    background: #3f6493;
    color: #c6c6c6;
    box-shadow: inset 1px 0 #fff, inset -1px 0 #fff, inset 0 1px #217346, inset 0 2px #fff;
}
.titles .t0 div {
    text-align: left;
}
.titles .t1 {
    background: #2f4d72;
    color: #999;
    box-shadow: inset 1px 0 #fff, inset -1px 0 #fff, inset 0 1px #217346, inset 0 2px #fff, inset 0 -1px #2f4d72, inset 0 -2px #fff;
}
.titles .t5 {
    box-shadow: inset 1px 0 #fff, inset -1px 0 #fff, inset 0 1px #217346, inset 0 -1px #fff, inset 0 2px #fff, inset 0 -2px #217346, inset 2px 0 #217346, inset -2px 0 #217346;
}
.titles .t6 {
    background: #4f81bd;
    color: #fff;
    border-bottom-color: #4f81bd;
}

/* scroll bars */
.vscroll {
    display: flex;
    flex-direction: column;
    width: 19px;
    margin: 2px 3px 0;
    background: #dadada;
}
.vscroll button,
.hscroll button {
    background: #fff;
    border: 1px solid #c6c6c6;
}
.vscroll button {
    height: 19px;
}
.vscroll .thumb {
    flex: 1;
    margin-top: 1px;
}
.vscroll .track {
    height: 13px;
}
.thumb {
    background: #fff;
    border: 1px solid #ababab;
}

/* sheet tabs */
.sheet-tabs {
    display: flex;
    height: 29px;
    font-size: 15px;
    color: #444;
}
.tab-nav {
    display: flex;
    gap: 23px;
    width: 103px;
    padding-left: 28px;
}
.sheet-tabs a {
    padding: 0 14px;
    height: 20px;
    margin-top: 4px;
    line-height: 14px;
    border-right: 1px solid #999;
}
.sheet-tabs .current {
    padding: 0 11px;
    height: 25px;
    margin-top: 0;
    line-height: 22px;
    background: #fff;
    color: #217346;
    font-weight: 700;
    border-left: 1px solid #999;
    border-bottom: 2px solid #217346;
}
.add {
    margin-left: 32px;
}
.sheet-tabs .dots {
    margin: 8px 14px 0 auto;
}
.hscroll {
    display: flex;
    width: 38%;
    height: 19px;
    margin: 5px 23px 0 0;
    background: #dadada;
}
.hscroll button {
    width: 19px;
}
.hscroll .thumb {
    flex: 1;
}
.hscroll .track {
    width: 47px;
}

/* status bar */
.status {
    display: flex;
    align-items: center;
    height: 27px;
    background: #f3f3f3;
    border-top: 1px solid #c6c6c6;
    font-size: 13px;
}
.ready {
    flex: 1;
    padding-left: 7px;
}
.count {
    margin-right: 21px;
}
.view {
    width: 41px;
    height: 26px;
}
.view.on {
    background: #c6c6c6;
}
.zoom-step {
    width: 20px;
}
.zoom {
    width: 125px;
    height: 14px;
    appearance: none;
    background: linear-gradient(#aaa, #aaa) 62px 3px / 1px 7px no-repeat, linear-gradient(#aaa, #aaa) 0 6px / 100% 1px no-repeat;
}
.zoom::-webkit-slider-thumb {
    appearance: none;
    width: 6px;
    height: 14px;
    background: #666;
}
.percent {
    margin: 0 8px 0 6px;
}

/* floating toolbar and context menu */
.mini-toolbar,
.context-menu {
    position: absolute;
    left: 482px;
    background: #fff;
    border: 1px solid #c6c6c6;
    box-shadow: 1px 2px 4px rgba(0, 0, 0, 0.2);
}
.mini-toolbar {
    top: 175px;
    padding: 3px;
}
.mini-toolbar .tool-row {
    height: 29px;
}
.mini-toolbar .tool {
    height: 28px;
}
.mini-family { width: 75px; height: 30px; }
.mini-size { width: 56px; height: 30px; }
.context-menu {
    top: 260px;
    width: 171px;
    padding: 1px;
    color: #555;
}
.context-menu button,
.menu-title {
    display: grid;
    grid-template-columns: 32px 1fr;
    align-items: center;
    width: 100%;
    height: 30px;
    padding-left: 5px;
    text-align: left;
}
.context-menu span {
    grid-column: 2;
}
.context-menu .menu-title {
    height: 27px;
    font-weight: 700;
    grid-template-columns: 25px 1fr;
}
.menu-title span {
    padding-left: 8px;
    line-height: 27px;
    background: #ebebeb;
    white-space: nowrap;
}
.context-menu .paste-option {
    height: 38px;
    padding-left: 39px;
}
hr {
    height: 1px;
    margin: 1px 0 1px 39px;
    border: 0;
    background: #d8d8d8;
}

/* notes over the sheet */
.note {
    position: absolute;
    margin: 0;
    font-family: 'Liberation Serif', 'Times New Roman', serif;
    font-weight: 700;
    color: #000;
    white-space: nowrap;
}
.note-large {
    left: 756px;
    top: 373px;
    font-size: 119px;
    line-height: 135px;
}
.note-small {
    left: 41px;
    top: 644px;
    font-size: 60px;
    line-height: 68px;
}
```
